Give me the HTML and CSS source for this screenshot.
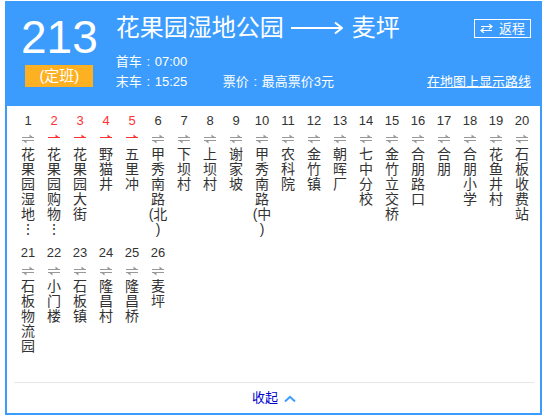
FILE: index.html
```html
<!DOCTYPE html>
<html lang="zh-CN">
<head>
<meta charset="utf-8">
<title>213路</title>
<link rel="stylesheet" href="styles.css">
</head>
<body>
<div class="box">
  <div class="head">
    <div class="idcol">
      <div class="bignum">213</div>
      <div class="badge">(定班)</div>
    </div>
    <div class="info">
      <div class="row1">
        <div class="title">
          <span>花果园湿地公园</span>
          <svg class="longarrow" width="52" height="14" viewBox="0 0 52 14"><path d="M0 7H50" stroke="#fff" stroke-width="2"/><path d="M44 1.5L51 7L44 12.5" stroke="#fff" stroke-width="2" fill="none"/></svg>
          <span>麦坪</span>
        </div>
        <a class="back"><svg width="13" height="9" viewBox="0 0 13 9"><path d="M1 2.5H12M9 0L12 2.5L9 5M12 6.5H1M4 4L1 6.5L4 9" stroke="#fff" stroke-width="1.2" fill="none"/></svg><span>返程</span></a>
      </div>
      <div class="line">首车<span class="colon">:</span>07:00</div>
      <div class="line row3"><span class="last">末车<span class="colon">:</span>15:25</span><span class="price">票价<span class="colon">:</span>最高票价3元</span><a class="map">在地图上显示路线</a></div>
    </div>
  </div>

  <div class="stops">
    <div class="stop"><div class="n">1</div><svg class="ic" viewBox="0 0 12 10"><path d="M0 3.5H12M0 6.5H12" stroke="#999"/><path d="M7.5 0.5L12 4H7.5ZM0 6L4.5 6V9.5Z" fill="#999"/></svg><div class="nm">花果园湿地⋮</div></div>
    <div class="stop red"><div class="n">2</div><svg class="ic" viewBox="0 0 12 10"><path d="M0 3.5H12" stroke="#f33"/><path d="M7.5 0.5L12 4H7.5Z" fill="#f33"/></svg><div class="nm">花果园购物⋮</div></div>
    <div class="stop red"><div class="n">3</div><svg class="ic" viewBox="0 0 12 10"><path d="M0 3.5H12" stroke="#f33"/><path d="M7.5 0.5L12 4H7.5Z" fill="#f33"/></svg><div class="nm">花果园大街</div></div>
    <div class="stop red"><div class="n">4</div><svg class="ic" viewBox="0 0 12 10"><path d="M0 3.5H12" stroke="#f33"/><path d="M7.5 0.5L12 4H7.5Z" fill="#f33"/></svg><div class="nm">野猫井</div></div>
    <div class="stop red"><div class="n">5</div><svg class="ic" viewBox="0 0 12 10"><path d="M0 3.5H12" stroke="#f33"/><path d="M7.5 0.5L12 4H7.5Z" fill="#f33"/></svg><div class="nm">五里冲</div></div>
    <div class="stop"><div class="n">6</div><svg class="ic" viewBox="0 0 12 10"><path d="M0 3.5H12M0 6.5H12" stroke="#999"/><path d="M7.5 0.5L12 4H7.5ZM0 6L4.5 6V9.5Z" fill="#999"/></svg><div class="nm">甲秀南路(北<wbr>)</div></div>
    <div class="stop"><div class="n">7</div><svg class="ic" viewBox="0 0 12 10"><path d="M0 3.5H12M0 6.5H12" stroke="#999"/><path d="M7.5 0.5L12 4H7.5ZM0 6L4.5 6V9.5Z" fill="#999"/></svg><div class="nm">下坝村</div></div>
    <div class="stop"><div class="n">8</div><svg class="ic" viewBox="0 0 12 10"><path d="M0 3.5H12M0 6.5H12" stroke="#999"/><path d="M7.5 0.5L12 4H7.5ZM0 6L4.5 6V9.5Z" fill="#999"/></svg><div class="nm">上坝村</div></div>
    <div class="stop"><div class="n">9</div><svg class="ic" viewBox="0 0 12 10"><path d="M0 3.5H12M0 6.5H12" stroke="#999"/><path d="M7.5 0.5L12 4H7.5ZM0 6L4.5 6V9.5Z" fill="#999"/></svg><div class="nm">谢家坡</div></div>
    <div class="stop"><div class="n">10</div><svg class="ic" viewBox="0 0 12 10"><path d="M0 3.5H12M0 6.5H12" stroke="#999"/><path d="M7.5 0.5L12 4H7.5ZM0 6L4.5 6V9.5Z" fill="#999"/></svg><div class="nm">甲秀南路(中<wbr>)</div></div>
    <div class="stop"><div class="n">11</div><svg class="ic" viewBox="0 0 12 10"><path d="M0 3.5H12M0 6.5H12" stroke="#999"/><path d="M7.5 0.5L12 4H7.5ZM0 6L4.5 6V9.5Z" fill="#999"/></svg><div class="nm">农科院</div></div>
    <div class="stop"><div class="n">12</div><svg class="ic" viewBox="0 0 12 10"><path d="M0 3.5H12M0 6.5H12" stroke="#999"/><path d="M7.5 0.5L12 4H7.5ZM0 6L4.5 6V9.5Z" fill="#999"/></svg><div class="nm">金竹镇</div></div>
    <div class="stop"><div class="n">13</div><svg class="ic" viewBox="0 0 12 10"><path d="M0 3.5H12M0 6.5H12" stroke="#999"/><path d="M7.5 0.5L12 4H7.5ZM0 6L4.5 6V9.5Z" fill="#999"/></svg><div class="nm">朝晖厂</div></div>
    <div class="stop"><div class="n">14</div><svg class="ic" viewBox="0 0 12 10"><path d="M0 3.5H12M0 6.5H12" stroke="#999"/><path d="M7.5 0.5L12 4H7.5ZM0 6L4.5 6V9.5Z" fill="#999"/></svg><div class="nm">七中分校</div></div>
    <div class="stop"><div class="n">15</div><svg class="ic" viewBox="0 0 12 10"><path d="M0 3.5H12M0 6.5H12" stroke="#999"/><path d="M7.5 0.5L12 4H7.5ZM0 6L4.5 6V9.5Z" fill="#999"/></svg><div class="nm">金竹立交桥</div></div>
    <div class="stop"><div class="n">16</div><svg class="ic" viewBox="0 0 12 10"><path d="M0 3.5H12M0 6.5H12" stroke="#999"/><path d="M7.5 0.5L12 4H7.5ZM0 6L4.5 6V9.5Z" fill="#999"/></svg><div class="nm">合朋路口</div></div>
    <div class="stop"><div class="n">17</div><svg class="ic" viewBox="0 0 12 10"><path d="M0 3.5H12M0 6.5H12" stroke="#999"/><path d="M7.5 0.5L12 4H7.5ZM0 6L4.5 6V9.5Z" fill="#999"/></svg><div class="nm">合朋</div></div>
    <div class="stop"><div class="n">18</div><svg class="ic" viewBox="0 0 12 10"><path d="M0 3.5H12M0 6.5H12" stroke="#999"/><path d="M7.5 0.5L12 4H7.5ZM0 6L4.5 6V9.5Z" fill="#999"/></svg><div class="nm">合朋小学</div></div>
    <div class="stop"><div class="n">19</div><svg class="ic" viewBox="0 0 12 10"><path d="M0 3.5H12M0 6.5H12" stroke="#999"/><path d="M7.5 0.5L12 4H7.5ZM0 6L4.5 6V9.5Z" fill="#999"/></svg><div class="nm">花鱼井村</div></div>
    <div class="stop"><div class="n">20</div><svg class="ic" viewBox="0 0 12 10"><path d="M0 3.5H12M0 6.5H12" stroke="#999"/><path d="M7.5 0.5L12 4H7.5ZM0 6L4.5 6V9.5Z" fill="#999"/></svg><div class="nm">石板收费站</div></div>
    <div class="stop"><div class="n">21</div><svg class="ic" viewBox="0 0 12 10"><path d="M0 3.5H12M0 6.5H12" stroke="#999"/><path d="M7.5 0.5L12 4H7.5ZM0 6L4.5 6V9.5Z" fill="#999"/></svg><div class="nm">石板物流园</div></div>
    <div class="stop"><div class="n">22</div><svg class="ic" viewBox="0 0 12 10"><path d="M0 3.5H12M0 6.5H12" stroke="#999"/><path d="M7.5 0.5L12 4H7.5ZM0 6L4.5 6V9.5Z" fill="#999"/></svg><div class="nm">小门楼</div></div>
    <div class="stop"><div class="n">23</div><svg class="ic" viewBox="0 0 12 10"><path d="M0 3.5H12M0 6.5H12" stroke="#999"/><path d="M7.5 0.5L12 4H7.5ZM0 6L4.5 6V9.5Z" fill="#999"/></svg><div class="nm">石板镇</div></div>
    <div class="stop"><div class="n">24</div><svg class="ic" viewBox="0 0 12 10"><path d="M0 3.5H12M0 6.5H12" stroke="#999"/><path d="M7.5 0.5L12 4H7.5ZM0 6L4.5 6V9.5Z" fill="#999"/></svg><div class="nm">隆昌村</div></div>
    <div class="stop"><div class="n">25</div><svg class="ic" viewBox="0 0 12 10"><path d="M0 3.5H12M0 6.5H12" stroke="#999"/><path d="M7.5 0.5L12 4H7.5ZM0 6L4.5 6V9.5Z" fill="#999"/></svg><div class="nm">隆昌桥</div></div>
    <div class="stop"><div class="n">26</div><svg class="ic" viewBox="0 0 12 10"><path d="M0 3.5H12M0 6.5H12" stroke="#999"/><path d="M7.5 0.5L12 4H7.5ZM0 6L4.5 6V9.5Z" fill="#999"/></svg><div class="nm">麦坪</div></div>
  </div>

  <div class="foot">
    <a class="fold">收起<svg width="12" height="7" viewBox="0 0 12 7"><path d="M1 6.5L6 1.8L11 6.5" stroke="#3c9cfe" stroke-width="2" fill="none"/></svg></a>
  </div>
</div>
</body>
</html>
```

FILE: styles.css
```css
* { box-sizing: border-box; }
html, body { margin: 0; padding: 0; background: #fff; }
body {
  font-family: "Liberation Sans", "Noto Sans CJK SC", sans-serif;
  color: #333;
}
.box {
  width: 537px;
  margin: 1px 0 0 5px;
  border: 2px solid #3c9cfe;
  background: #fff;
}
.head {
  background: #3c9cfe;
  color: #fff;
  display: flex;
  padding: 11px 9px 14px 14px;
}
.idcol {
  display: flex;
  flex-direction: column;
  align-items: center;
}
.bignum {
  font-size: 46px;
  line-height: 46px;
}
.badge {
  margin-top: 5px;
  width: 68px;
  height: 22px;
  line-height: 22px;
  background: #fdb022;
  text-align: center;
  font-size: 15px;
}
.info {
  flex: 1;
  margin-left: 18px;
  display: flex;
  flex-direction: column;
}
.row1 {
  display: flex;
  align-items: center;
  justify-content: space-between;
  height: 28px;
  margin-bottom: 10px;
}
.title {
  display: flex;
  align-items: center;
  font-size: 24px;
  line-height: 28px;
}
.longarrow { margin: 0 9px 0 7px; display: block; }
.back {
  display: flex;
  align-items: center;
  height: 19px;
  border: 1px solid #fff;
  padding: 0 5px;
  font-size: 13px;
  line-height: 17px;
  gap: 6px;
}
.back svg { display: block; }
.line {
  font-size: 13px;
  line-height: 20px;
  height: 20px;
}
.colon {
  display: inline-block;
  width: 13px;
  text-align: center;
}
.row3 { display: flex; }
.last { width: 107px; }
.map {
  margin-left: auto;
  text-decoration: underline;
}
.stops {
  display: flex;
  flex-wrap: wrap;
  row-gap: 8px;
  padding: 7px 0 28px 8px;
}
.stop {
  width: 26px;
  display: flex;
  flex-direction: column;
  align-items: center;
}
.n {
  font-size: 13px;
  line-height: 16px;
  color: #333;
}
.red .n { color: #f33; }
.ic {
  display: block;
  width: 12px;
  height: 10px;
  margin: 5px 0 3px;
}
.nm {
  width: 20px;
  font-size: 14px;
  line-height: 15px;
  text-align: center;
  word-break: break-all;
  color: #333;
}
.foot {
  margin: 0 6px 0 7px;
  border-top: 1px solid #e6e6e6;
  height: 31px;
  display: flex;
  justify-content: center;
  align-items: center;
}
.fold {
  display: flex;
  align-items: center;
  gap: 6px;
  font-size: 13px;
  line-height: 30px;
  color: #00c;
}
.fold svg { display: block; }
```
